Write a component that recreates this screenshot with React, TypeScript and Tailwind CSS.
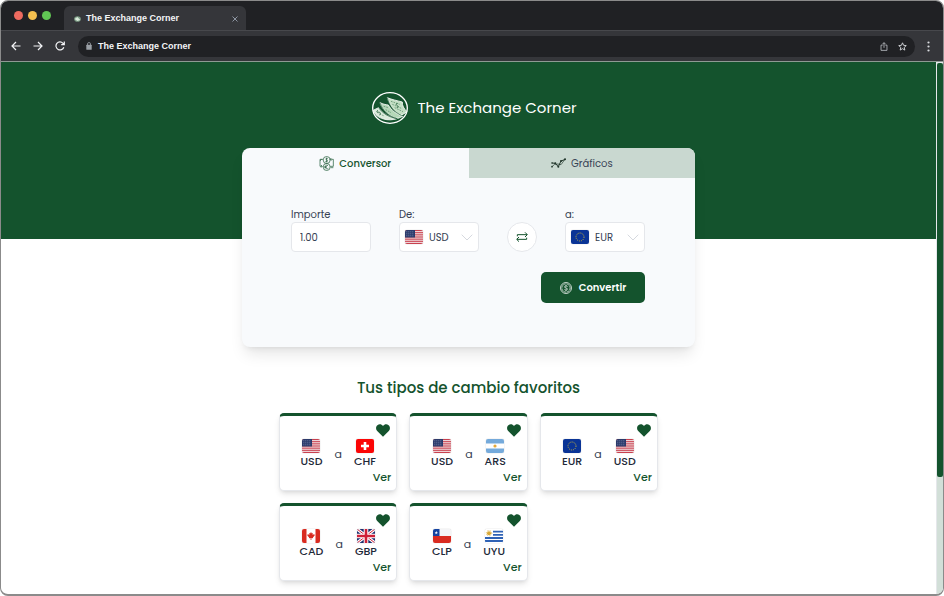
import React, { useState } from "react";

type Code = "USD" | "CHF" | "ARS" | "EUR" | "CAD" | "GBP" | "CLP" | "UYU";

function FlagArt({ code }: { code: Code }) {
  switch (code) {
    case "USD":
      return (
        <g>
          <rect width="18" height="14" fill="#f3e4e6" />
          {[0, 1, 2, 3, 4, 5, 6].map((i) => (
            <rect key={i} y={i * 2.15} width="18" height="1.1" fill="#c8414f" />
          ))}
          <rect width="10" height="7.5" fill="#2b3a6b" />
          {[1.5, 3.5, 5.5, 7.5].map((x) =>
            [1.5, 3.5, 5.5].map((y) => (
              <rect key={`${x}-${y}`} x={x} y={y} width="0.7" height="0.7" fill="#b9c1da" />
            )),
          )}
        </g>
      );
    case "EUR":
      return (
        <g>
          <rect width="18" height="14" fill="#0a3496" />
          <circle cx="9" cy="7" r="4" fill="none" stroke="#c9b43c" strokeWidth="1" strokeDasharray="1 1.09" />
        </g>
      );
    case "CHF":
      return (
        <g>
          <rect width="18" height="14" fill="#fb0606" />
          <path d="M7.7 3h2.6v2.7H13v2.6h-2.7V11H7.7V8.3H5V5.7h2.7z" fill="#fff" />
        </g>
      );
    case "ARS":
      return (
        <g>
          <rect width="18" height="14" fill="#75aadb" />
          <rect y="4.5" width="18" height="5" fill="#fff" />
          <circle cx="9" cy="7" r="1.6" fill="#e5a93a" />
        </g>
      );
    case "CAD":
      return (
        <g>
          <rect width="18" height="14" fill="#fff" />
          <rect width="4.5" height="14" fill="#d92b20" />
          <rect x="13.5" width="4.5" height="14" fill="#d92b20" />
          <path
            d="M9 3l.9 1.5 1-.4-.3 2 1.6-1 .5 1.3-1.8 2 .2.9-1.7-.2V11h-.8V9.1l-1.7.2.2-.9-1.8-2 .5-1.3 1.6 1-.3-2 1 .4z"
            fill="#d92b20"
          />
        </g>
      );
    case "GBP":
      return (
        <g>
          <rect width="18" height="14" fill="#1f2f6f" />
          <path d="M0 0l18 14M18 0L0 14" stroke="#fff" strokeWidth="3" />
          <path d="M0 0l18 14M18 0L0 14" stroke="#cf2038" strokeWidth="1" />
          <path d="M9 0v14M0 7h18" stroke="#fff" strokeWidth="4.6" />
          <path d="M9 0v14M0 7h18" stroke="#cf2038" strokeWidth="2.6" />
        </g>
      );
    case "CLP":
      return (
        <g>
          <rect width="18" height="14" fill="#f4f4f6" />
          <rect y="7" width="18" height="7" fill="#d92b20" />
          <rect width="6.5" height="7" fill="#1443a0" />
          <path d="M3.3 2l.5 1.2h1.2l-1 .8.4 1.2-1.1-.7-1.1.7.4-1.2-1-.8h1.2z" fill="#fff" />
        </g>
      );
    case "UYU":
      return (
        <g>
          <rect width="18" height="14" fill="#fff" />
          <path d="M8 2.7h10M8 5.8h10M0 9h18M0 12h18" stroke="#2f62b5" strokeWidth="1.8" />
          <circle cx="4" cy="4.2" r="2" fill="#d9a936" />
          <circle cx="4" cy="4.2" r="2.7" fill="none" stroke="#d9a936" strokeWidth="0.8" strokeDasharray="0.8 0.9" />
        </g>
      );
  }
}

function Flag({ code }: { code: Code }) {
  return (
    <svg
      viewBox="0 0 18 14"
      className="block h-[14px] w-[18px] rounded-[2px] shadow-[0_0_1px_rgba(0,0,0,0.35)]"
      aria-hidden="true"
    >
      <FlagArt code={code} />
    </svg>
  );
}

function Logo() {
  return (
    <svg viewBox="0 0 108 96" className="h-8 w-9" fill="none" aria-hidden="true">
      <ellipse cx="54" cy="48" rx="52" ry="46" stroke="#fff" strokeWidth="4" />
      <path d="M46 17C60 23 76 26 91 30c-1 11 5 20 14 29-6 5-14 9-21 12C70 60 53 42 46 17z" fill="#c3dfc4" stroke="#fff" strokeWidth="2.5" />
      <path d="M24 32c8 4 16 6 25 7 8 15 25 28 43 34l-14 6C55 76 32 57 24 32z" fill="#b5d8b8" stroke="#fff" strokeWidth="2.5" />
      <path d="M4 55c5-3 11-6 16-8 13 19 33 29 55 33-12 4-28 5-40 1C20 77 8 68 4 55z" fill="#dcebdc" stroke="#fff" strokeWidth="2.5" />
      <path d="M46 17c5 26 22 44 43 54M24 32c8 25 28 42 52 48M20 47c13 19 33 29 55 33" stroke="#14532d" strokeWidth="2" />
      <path d="M57 28l26 9M61 37l27 12M68 47l25 12M35 43l14 4M41 53l16 9M15 57l10 4M23 66l14 6" stroke="#4f8060" strokeWidth="2" strokeDasharray="5 3" />
      <path d="M18 55c-6 2-4 8 2 7s8 5 2 7M77 34c-6 0-6 5-1 7s3 6-2 6" stroke="#2f6a45" strokeWidth="2.5" />
    </svg>
  );
}

function Coin({ className }: { className: string }) {
  return (
    <svg viewBox="0 0 24 24" className={className} fill="none" stroke="currentColor" strokeWidth="1.5" aria-hidden="true">
      <circle cx="12" cy="12" r="11" />
      <circle cx="12" cy="12" r="8.3" strokeDasharray="5 1.5" />
      <path d="M15 9.5c-.5-1.2-1.5-1.7-3-1.7-3.8 0-3.8 4 0 4.2s3.8 4.2 0 4.2c-1.5 0-2.5-.6-3-1.8M12 6.3v1.5M12 16.2v1.5" />
    </svg>
  );
}

function ConvertIcon() {
  return (
    <svg viewBox="0 0 45 45" className="h-[15px] w-[15px]" fill="none" stroke="#14532d" strokeWidth="2" aria-hidden="true">
      <circle cx="23" cy="12" r="10.5" />
      <circle cx="23" cy="33" r="10.5" />
      <path d="M26 8c-5-3-8 2-3 4s2 7-4 4M23 5v14M27 29c-6-4-9 1-8 5s5 6 9 3M16 32h8M16 35h7" />
      <path d="M12 10H3v21h6M6 27l4 4-4 4M34 10h9v21h-9M37 14l-4-4 4-4M3 14l5-4M43 35h-8" />
    </svg>
  );
}

function ChartIcon() {
  return (
    <svg viewBox="0 0 45 30" className="h-[10px] w-[15px]" fill="none" stroke="#20352a" strokeWidth="3" aria-hidden="true">
      <path d="M3 15l10 1 9 10 8-17 13-5" />
      <path d="M3 26l8-7 10-1 9 2 11-15" strokeWidth="2" />
      <g fill="#20352a" stroke="none">
        <circle cx="3" cy="15" r="2.5" />
        <circle cx="13" cy="16" r="3" />
        <circle cx="22" cy="26" r="3" />
        <circle cx="30" cy="9" r="3" />
        <circle cx="42" cy="4" r="3" />
        <circle cx="3" cy="26" r="2.5" />
      </g>
    </svg>
  );
}

function BrowserBar() {
  return (
    <div className="font-['Liberation_Sans',Arial,sans-serif] text-[9px] font-bold text-gray-100">
      <div className="flex h-[29px] items-end bg-[#202124]">
        <div className="flex gap-[5px] self-center px-[13px]">
          <span className="h-[9px] w-[9px] rounded-full bg-[#ee6a5f]" />
          <span className="h-[9px] w-[9px] rounded-full bg-[#f5bf4f]" />
          <span className="h-[9px] w-[9px] rounded-full bg-[#61c554]" />
        </div>
        <div className="flex h-6 w-[182px] items-center gap-[5px] rounded-t-[6px] bg-[#35363a] pt-[2px] pr-2 pl-[10px]">
          <svg viewBox="0 0 21 18" className="h-[6px] w-[7px]" aria-hidden="true">
            <ellipse cx="10.5" cy="9" rx="10" ry="8.5" fill="#7d9e86" />
            <path d="M2 9l8-6 9 9-9 3z" fill="#d9eadb" />
          </svg>
          <span className="flex-1">The Exchange Corner</span>
          <button type="button" aria-label="Cerrar" className="text-gray-400">
            <svg viewBox="0 0 6 6" className="h-[6px] w-[6px]" stroke="currentColor" strokeWidth="0.9">
              <path d="M.5 .5l5 5M5.5 .5l-5 5" />
            </svg>
          </button>
        </div>
      </div>
      <div className="flex h-[31px] items-center border-t border-[#47484c] bg-[#35363a] pr-[13px] pl-[10px]">
        <div className="flex gap-3">
          <button type="button" aria-label="Atrás">
            <svg viewBox="0 0 10 10" className="h-[10px] w-[10px]" fill="none" stroke="currentColor" strokeWidth="1.2">
              <path d="M9.5 5H1M5 1L1 5l4 4" />
            </svg>
          </button>
          <button type="button" aria-label="Adelante">
            <svg viewBox="0 0 10 10" className="h-[10px] w-[10px]" fill="none" stroke="currentColor" strokeWidth="1.2">
              <path d="M.5 5H9M5 1l4 4-4 4" />
            </svg>
          </button>
          <button type="button" aria-label="Recargar">
            <svg viewBox="0 0 10 10" className="h-[10px] w-[10px]" fill="none" stroke="currentColor" strokeWidth="1.2">
              <path d="M8.8 6.2A4 4 0 1 1 8 2.3L9 3.5M9.3 .5v3.2H6.2" />
            </svg>
          </button>
        </div>
        <div className="mr-3 ml-[13px] flex h-[21px] flex-1 items-center rounded-full bg-[#202124] px-2">
          <svg viewBox="0 0 6 8" className="h-2 w-[6px]" fill="#9aa0a6" aria-hidden="true">
            <rect x="0.3" y="2.8" width="5.4" height="5" rx="0.5" />
            <path d="M1.5 3V2a1.5 1.5 0 0 1 3 0v1" fill="none" stroke="#9aa0a6" strokeWidth="0.8" />
          </svg>
          <span className="ml-[6px] flex-1 pt-px">The Exchange Corner</span>
          <svg viewBox="0 0 8 10" className="mr-[10px] h-[9px] w-2" fill="none" stroke="#bdc1c6" strokeWidth="0.9" aria-hidden="true">
            <path d="M2.5 3.5H.7v5.8h6.6V3.5H5.5M4 6.5V.8M2.2 2.5L4 .7l1.8 1.8" />
          </svg>
          <svg viewBox="0 0 10 10" className="h-[9px] w-[9px]" fill="none" stroke="#dadce0" strokeWidth="1" aria-hidden="true">
            <path d="M5 .9l1.2 2.8 3 .3-2.3 2 .7 3L5 7.4 2.4 9l.7-3L.8 4l3-.3z" />
          </svg>
        </div>
        <svg viewBox="0 0 3 11" className="h-[11px] w-[3px]" fill="#dadce0" aria-hidden="true">
          <circle cx="1.5" cy="1.5" r="1.1" />
          <circle cx="1.5" cy="5.5" r="1.1" />
          <circle cx="1.5" cy="9.5" r="1.1" />
        </svg>
      </div>
    </div>
  );
}

function CurrencySelect({ id, label, initial }: { id: string; label: string; initial: Code }) {
  const [code, setCode] = useState<Code>(initial);
  return (
    <div className="w-20">
      <label htmlFor={id} className="block h-4 leading-[18px]">
        {label}
      </label>
      <div className="relative">
        <select
          id={id}
          value={code}
          onChange={(e) => setCode(e.target.value as Code)}
          className="block h-[30px] w-full appearance-none rounded-[4px] border border-gray-200 bg-white pl-[29px] text-[10px] text-gray-700"
        >
          {["USD", "EUR", "CHF", "ARS", "CAD", "GBP", "CLP", "UYU"].map((c) => (
            <option key={c}>{c}</option>
          ))}
        </select>
        <span className="pointer-events-none absolute inset-y-0 left-[6px] flex items-center">
          <Flag code={code} />
        </span>
        <svg
          viewBox="0 0 12 7"
          className="pointer-events-none absolute top-[12px] right-[6px] h-[7px] w-3"
          fill="none"
          stroke="#d1d5db"
          strokeWidth="0.9"
          aria-hidden="true"
        >
          <path d="M.7 .7L6 6l5.3-5.3" />
        </svg>
      </div>
    </div>
  );
}

function Converter() {
  return (
    <section className="w-[453px] max-w-full overflow-hidden rounded-lg bg-[#f8fafc] shadow-lg">
      <div role="tablist" className="grid h-[30px] grid-cols-2 text-[10px]">
        <button type="button" role="tab" aria-selected="true" className="flex items-center justify-center gap-[5px] font-medium text-[#14532d]">
          <ConvertIcon />
          Conversor
        </button>
        <button type="button" role="tab" aria-selected="false" className="flex items-center justify-center gap-[5px] bg-[#c9d8d0] text-gray-700">
          <ChartIcon />
          Gráficos
        </button>
      </div>
      <form className="pt-7 pr-[50px] pb-11 pl-[49px] text-[10px] text-gray-700" onSubmit={(e) => e.preventDefault()}>
        <div className="flex items-end justify-between">
          <div className="w-20">
            <label htmlFor="importe" className="block h-4 leading-[18px]">
              Importe
            </label>
            <input
              id="importe"
              type="text"
              defaultValue="1.00"
              className="block h-[30px] w-full rounded-[4px] border border-gray-200 bg-white px-2 pt-px"
            />
          </div>
          <CurrencySelect id="de" label="De:" initial="USD" />
          <button
            type="button"
            aria-label="Intercambiar"
            className="flex h-[30px] w-[30px] items-center justify-center rounded-full border border-gray-200 bg-white text-[#14532d]"
          >
            <svg viewBox="0 0 36 30" className="h-[10px] w-3" fill="none" stroke="currentColor" strokeWidth="3">
              <path d="M4 13V8h29M27 1l7 7-7 7M32 17v5H3M9 15l-7 7 7 7" />
            </svg>
          </button>
          <CurrencySelect id="a" label="a:" initial="EUR" />
        </div>
        <div className="mt-5 flex justify-end">
          <button
            type="submit"
            className="flex h-[31px] w-[104px] items-center justify-center gap-[7px] rounded-[5px] bg-[#14532d] text-[10px] font-semibold text-white"
          >
            <Coin className="h-3 w-3" />
            Convertir
          </button>
        </div>
      </form>
    </section>
  );
}

function Pair({ code }: { code: Code }) {
  return (
    <div className="flex flex-col items-center">
      <Flag code={code} />
      <span className="leading-4 font-medium text-gray-800">{code}</span>
    </div>
  );
}

function FavoriteCard({ from, to }: { from: Code; to: Code }) {
  return (
    <li className="flex h-[78px] flex-col rounded-[5px] border border-t-3 border-gray-200 border-t-[#14532d] bg-white pt-2 text-[11px] shadow-md">
      <button type="button" aria-label="Quitar de favoritos" className="mr-[6px] self-end">
        <svg viewBox="0 0 14 13" className="block h-[13px] w-[14px]" fill="#14532d">
          <path d="M7 12.8L1.2 7C-.5 5.2-.2 2.5 1.4 1.2 3.2-.3 5.6 .1 7 2c1.4-1.9 3.8-2.3 5.6-.8 1.6 1.3 1.9 4 .2 5.8z" />
        </svg>
      </button>
      <div className="mt-[2px] flex items-center justify-center gap-3">
        <Pair code={from} />
        <span className="text-gray-700">a</span>
        <Pair code={to} />
      </div>
      <a href="#detalle" className="mr-[5px] self-end leading-4 font-medium text-[#14532d]">
        Ver
      </a>
    </li>
  );
}

const favorites: [Code, Code][] = [
  ["USD", "CHF"],
  ["USD", "ARS"],
  ["EUR", "USD"],
  ["CAD", "GBP"],
  ["CLP", "UYU"],
];

export default function App() {
  return (
    <div className="flex min-h-screen flex-col overflow-hidden rounded-lg border border-b-2 border-[#8b8b8b] bg-white font-[Poppins,Inter,sans-serif]">
      <BrowserBar />
      <div className="flex flex-1 border-t border-[#8f9a94]">
        <div className="flex-1">
          <header className="h-[177px] bg-[#14532d] pt-[30px]">
            <div className="flex items-center justify-center gap-[9px] pl-3 text-white">
              <Logo />
              <h1 className="text-[15px] leading-8">The Exchange Corner</h1>
            </div>
          </header>
          <main className="-mt-[91px] flex flex-col items-center pb-3">
            <Converter />
            <h2 className="mt-[29px] mb-[13px] text-[15px] leading-6 font-medium text-[#14532d]">Tus tipos de cambio favoritos</h2>
            <ul className="grid w-[379px] grid-cols-3 gap-3">
              {favorites.map(([from, to]) => (
                <FavoriteCard key={from + to} from={from} to={to} />
              ))}
            </ul>
          </main>
        </div>
        <div className="flex w-[7px] flex-col border-t border-l border-gray-200 bg-[#d2dfd8]">
          <div className="h-[78%] rounded-[2px] bg-[#14532d]" />
        </div>
      </div>
    </div>
  );
}
